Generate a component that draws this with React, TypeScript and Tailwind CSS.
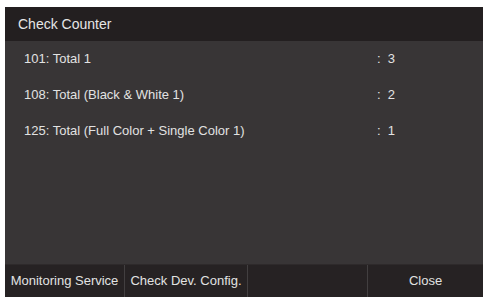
const rows = [
  { label: "101: Total 1", value: "3" },
  { label: "108: Total (Black & White 1)", value: "2" },
  { label: "125: Total (Full Color + Single Color 1)", value: "1" },
];

const buttons = ["Monitoring Service", "Check Dev. Config.", "", "Close"];

export default function App() {
  return (
    <div
      className="w-[490px] h-[301px] bg-white pt-[7px] pl-[5px]"
      style={{ fontFamily: '"Liberation Sans", Arial, sans-serif' }}
    >
      <div className="w-[478px] h-[290px] flex flex-col bg-[#383536]">
        {/* Header */}
        <div className="h-[34px] shrink-0 bg-[#231f20] flex items-center pl-[13px] text-[14px] text-[#e6e6e6]">
          Check Counter
        </div>

        {/* Counter rows */}
        <div className="flex-1 flex flex-col">
          {rows.map((r) => (
            <div key={r.label} className="h-[36px] flex items-center pl-[19px] text-[13px] text-[#e2e2e2]">
              <span className="w-[353px]">{r.label}</span>
              <span>:&nbsp;&nbsp;{r.value}</span>
            </div>
          ))}
        </div>

        {/* Footer buttons */}
        <div className="h-[33px] shrink-0 flex bg-[#262223] border-t border-[#2e2a2b]">
          {buttons.map((b, i) => (
            <div
              key={i}
              className={`flex items-center justify-center text-[13px] text-[#e2e2e2] ${
                i < 3 ? "border-r border-[#423f40]" : ""
              } ${i === 3 ? "flex-1" : i === 2 ? "w-[120px]" : i === 1 ? "w-[123px]" : "w-[120px]"}`}
            >
              {b}
            </div>
          ))}
        </div>
      </div>
    </div>
  );
}
